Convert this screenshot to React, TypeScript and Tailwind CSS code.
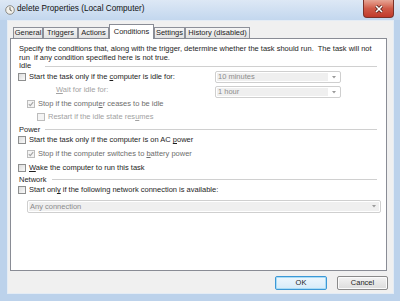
import React from "react";

const font = "font-['Liberation_Sans',Arial,sans-serif]";

function Checkbox({ checked = false, disabled = false }: { checked?: boolean; disabled?: boolean }) {
    return (
        <span
            className={`flex h-[8px] w-[8px] shrink-0 items-center justify-center border ${
                disabled
                    ? "border-[#bcbcbc] bg-[#f4f4f4]"
                    : "border-[#8e8f8f] bg-gradient-to-br from-[#dcdcdc] to-[#fafafa]"
            }`}
        >
            {checked && (
                <svg width="6" height="6" viewBox="0 0 6 6">
                    <path d="M0.8 3.1 L2.3 4.6 L5.2 1.2" fill="none" stroke="#a3a3a3" strokeWidth="1.1" />
                </svg>
            )}
        </span>
    );
}

function Combo({ value, width, split = true }: { value: string; width: string; split?: boolean }) {
    return (
        <div className={`flex h-[12px] shrink-0 rounded-[2px] border border-[#cfcfcf] bg-white p-px ${width}`}>
            <div className="flex flex-1 items-center bg-[#efefef] pl-px text-[#8c8c8c]">{value}</div>
            <div className={`flex w-[11px] items-center justify-center ${split ? "bg-white" : "bg-[#efefef]"}`}>
                <svg width="4" height="3" viewBox="0 0 4 3">
                    <path d="M0 0 H4 L2 2.5 Z" fill="#9a9a9a" />
                </svg>
            </div>
        </div>
    );
}

function Section({ label }: { label: string }) {
    return (
        <div className="ml-px flex h-[8px] items-center gap-[5px]">
            <span className="min-w-[21px] text-[#1e1e1e]">{label}</span>
            <span className="mr-[5px] h-px flex-1 bg-[#d0d0d0]" />
        </div>
    );
}

function Row({
    children,
    checked,
    disabled,
    indent = "",
    extra = "",
}: {
    children: React.ReactNode;
    checked?: boolean;
    disabled?: boolean;
    indent?: string;
    extra?: string;
}) {
    return (
        <div className={`flex items-center gap-[3px] ${indent} ${extra}`}>
            <Checkbox checked={checked} disabled={disabled} />
            <span className={disabled ? "text-[#6d6d6d]" : "text-[#1e1e1e]"}>{children}</span>
        </div>
    );
}

const tabs = ["General", "Triggers", "Actions", "Conditions", "Settings", "History (disabled)"];
const tabWidths = ["w-[30px]", "w-[35px]", "w-[31px]", "w-[45px]", "w-[31px]", "w-[65px]"];

export default function App() {
    return (
        <div className={`flex h-[301px] w-[400px] flex-col bg-[#bcd2eb] text-[7.5px] leading-none ${font}`}>
            {/* title bar */}
            <div className="flex h-[20px] shrink-0 items-start bg-gradient-to-b from-[#dde8f5] to-[#c3d7ee]">
                <svg className="ml-[5px] mt-[5px]" width="10" height="10" viewBox="0 0 10 10">
                    <circle cx="5" cy="5" r="4.3" fill="#f2f0ea" stroke="#8b8b86" strokeWidth="1" />
                    <path d="M5 2.2 V5 L6.8 6" fill="none" stroke="#55554f" strokeWidth="0.9" />
                </svg>
                <span className="ml-[2px] mt-[5px] text-[8.2px] text-[#111]">delete Properties (Local Computer)</span>
                <div className="ml-auto mr-[6px] flex h-[18px] w-[31px] items-center justify-center rounded-b-[4px] border border-t-0 border-[#7a3129] bg-gradient-to-b from-[#e6a595] via-[#cf5a48] to-[#c0392b]">
                    <svg width="10" height="8" viewBox="0 0 10 8">
                        <path d="M2 1 L8 7 M8 1 L2 7" stroke="#4b1a14" strokeWidth="3" />
                        <path d="M2 1 L8 7 M8 1 L2 7" stroke="#ffffff" strokeWidth="1.6" />
                    </svg>
                </div>
            </div>

            {/* client area */}
            <div className="mb-[7px] ml-[7px] mr-[6px] flex flex-1 flex-col border border-[#e4ecf5] bg-[#f0f0f0]">
                <div className="flex h-[17px] shrink-0 items-end pl-[5px]">
                    {tabs.map((t, i) =>
                        i === 3 ? (
                            <div
                                key={t}
                                className={`relative z-10 -mb-px flex h-[15px] items-center justify-center border border-b-0 border-[#898c95] bg-white text-[#1e1e1e] ${tabWidths[i]}`}
                            >
                                {t}
                            </div>
                        ) : (
                            <div
                                key={t}
                                className={`flex h-[11px] items-center justify-center border border-b-0 border-[#8d9099] bg-gradient-to-b from-[#f5f5f5] to-[#e2e2e2] text-[#1e1e1e] ${tabWidths[i]}`}
                            >
                                {t}
                            </div>
                        )
                    )}
                </div>

                {/* tab panel */}
                <div className="ml-[2px] mr-[6px] flex h-[233px] flex-col border border-[#898c95] bg-white pl-[7px] pr-[4px]">
                    <p className="ml-px whitespace-pre pt-[6px] leading-[8.6px] text-[#1e1e1e]">
                        Specify the conditions that, along with the trigger, determine whether the task should run.  The task will not
                        <br />
                        run  if any condition specified here is not true.
                    </p>
                    <Section label="Idle" />
                    <div className="mt-px flex h-[12px] items-center">
                        <div className="flex w-[197px] items-center gap-[3px]">
                            <Checkbox />
                            <span className="text-[#1e1e1e]">
                                Start the task only if the <u>c</u>omputer is idle for:
                            </span>
                        </div>
                        <Combo value="10 minutes" width="w-[126px]" />
                    </div>
                    <div className="mt-[3px] flex h-[12px] items-start">
                        <span className="ml-[38px] w-[159px] leading-[8px] text-[#a2a2a2]">
                            <u>W</u>ait for idle for:
                        </span>
                        <Combo value="1 hour" width="w-[126px]" />
                    </div>
                    <Row checked disabled indent="ml-[9px]" extra="h-[11px]">
                        Stop if the comput<u>e</u>r ceases to be idle
                    </Row>
                    <Row disabled indent="ml-[19px]" extra="mt-px h-[13px]">
                        <span className="text-[#a2a2a2]">
                            Restart if the idle state res<u>u</u>mes
                        </span>
                    </Row>
                    <div className="flex h-[13px] items-center">
                        <div className="flex-1">
                            <Section label="Power" />
                        </div>
                    </div>
                    <Row extra="h-[8px]">
                        Start the task only if the computer is on AC <u>p</u>ower
                    </Row>
                    <Row checked disabled indent="ml-[9px]" extra="mt-[3px] h-[13px]">
                        Stop if the computer switches to <u>b</u>attery power
                    </Row>
                    <Row extra="mt-px h-[13px]">
                        <u>W</u>ake the computer to run this task
                    </Row>
                    <div className="flex h-[11px] items-center">
                        <div className="flex-1">
                            <Section label="Network" />
                        </div>
                    </div>
                    <Row extra="h-[10px]">
                        Start onl<u>y</u> if the following network connection is available:
                    </Row>
                    <div className="ml-[9px] mt-[5px]">
                        <div className="flex h-[13px] w-[354px] rounded-[2px] border border-[#cfcfcf] bg-white p-px">
                            <div className="flex flex-1 items-center bg-[#efefef] pl-[1px] text-[#8c8c8c]">Any connection</div>
                            <div className="flex w-[11px] items-center justify-center bg-[#efefef]">
                                <svg width="4" height="3" viewBox="0 0 4 3">
                                    <path d="M0 0 H4 L2 2.5 Z" fill="#9a9a9a" />
                                </svg>
                            </div>
                        </div>
                    </div>
                </div>

                {/* buttons */}
                <div className="mt-[5px] flex justify-end gap-[10px] pr-[5px]">
                    <button className="flex h-[14px] w-[52px] items-center justify-center rounded-[2px] border border-[#3c98d6] bg-gradient-to-b from-[#eef7fd] to-[#d6ebf9] text-[#1e1e1e] shadow-[inset_0_0_0_1px_#a9dcf6]">
                        OK
                    </button>
                    <button className="flex h-[14px] w-[51px] items-center justify-center rounded-[2px] border border-[#8a8a8a] bg-gradient-to-b from-[#f3f3f3] to-[#dcdcdc] text-[#1e1e1e] shadow-[inset_0_0_0_1px_#fbfbfb]">
                        Cancel
                    </button>
                </div>
            </div>
        </div>
    );
}
